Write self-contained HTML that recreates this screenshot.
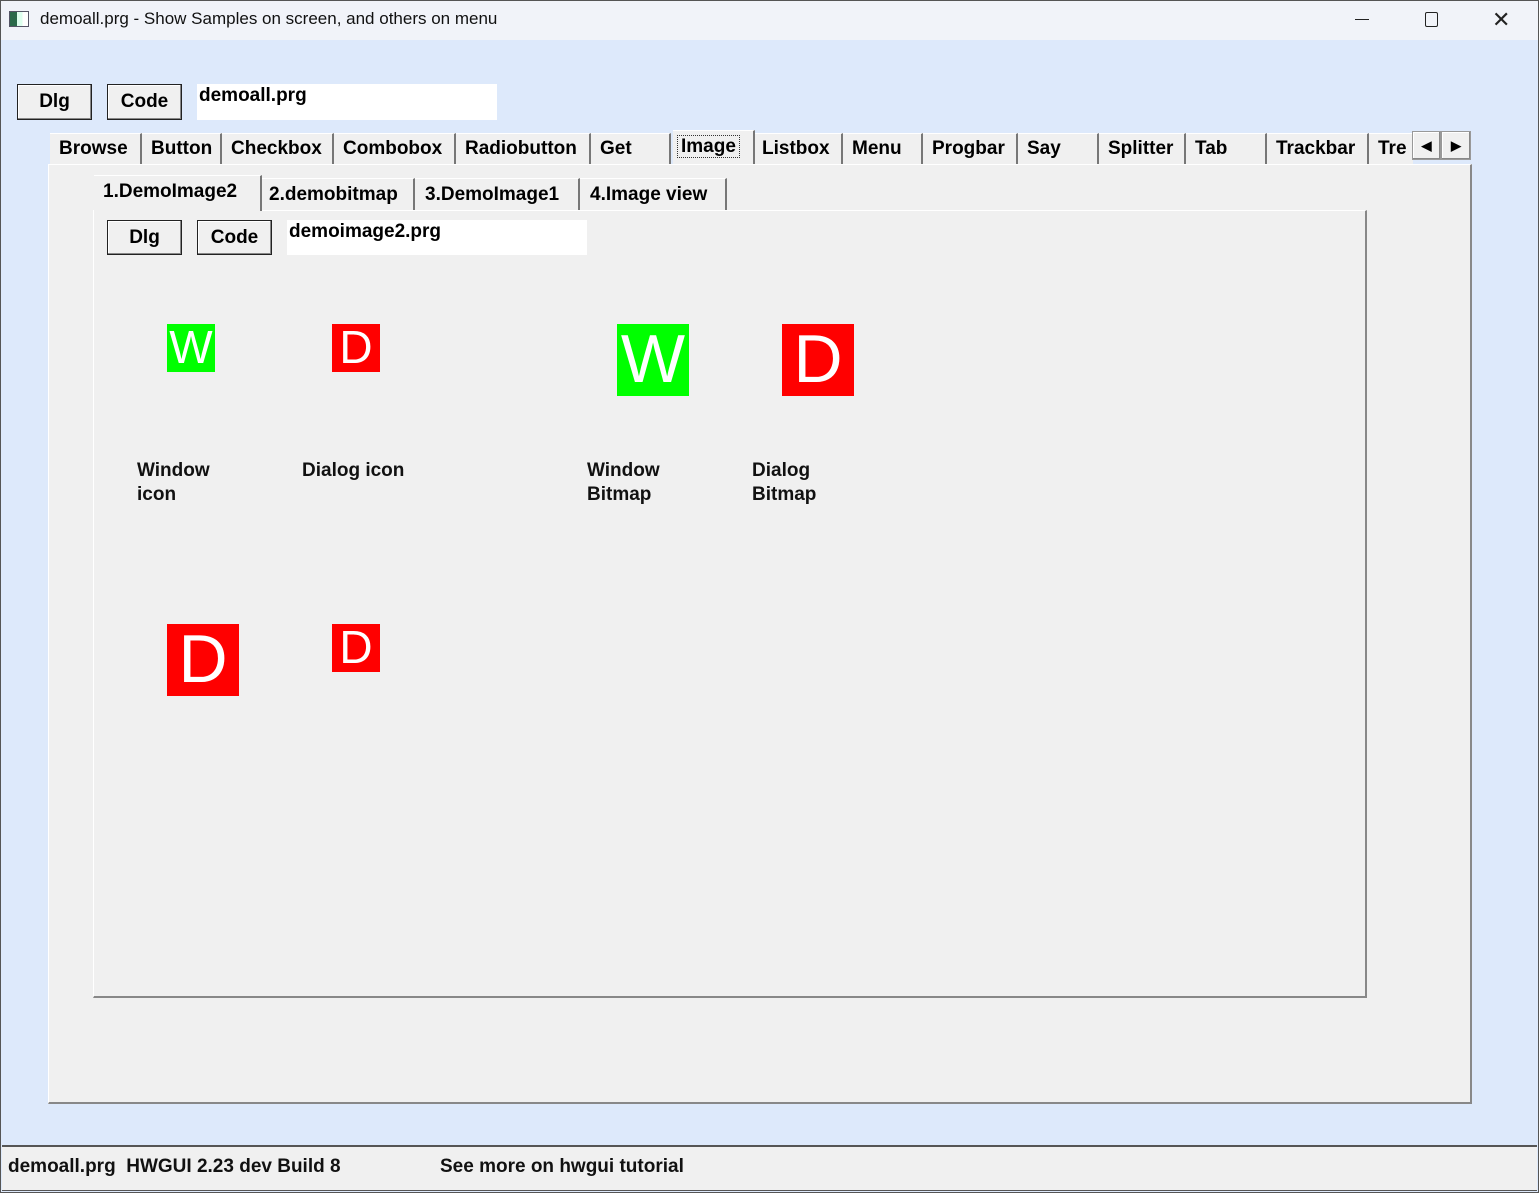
<!DOCTYPE html>
<html><head><style>
*{margin:0;padding:0;box-sizing:border-box}
body{width:1539px;height:1193px;position:relative;background:#dde9fb;overflow:hidden;font-family:"Liberation Sans",sans-serif}
.a{position:absolute}
.t{font-weight:bold;font-size:19px;color:#111;white-space:nowrap}
.btn{position:absolute;background:#f0f0f0;border:1px solid #222;box-shadow:inset -1px -1px 0 #888,inset 1px 1px 0 #fff;text-align:center;font-weight:bold;font-size:19px;line-height:34px}
.ed{position:absolute;background:#fff;font-weight:bold;font-size:19px;padding-left:2px;line-height:24px}
.tab{position:absolute;top:133px;height:31px;background:#f0f0f0;border-top:1px solid #fff;border-right:2px solid #777;font-weight:bold;font-size:19px;line-height:30px;padding-left:9px;white-space:nowrap;overflow:hidden}
.itab{position:absolute;top:178px;height:32px;background:#f0f0f0;border-top:1px solid #fff;border-right:2px solid #777;font-weight:bold;font-size:19px;line-height:32px;padding-left:7px;white-space:nowrap}
.ic{position:absolute;color:#fff;text-align:center;font-family:"Liberation Sans",sans-serif}
</style></head><body>
<div class="a" style="left:0;top:0;width:1539px;height:40px;background:#f1f3f9"></div>
<div class="a" style="left:9px;top:11px;width:20px;height:16px;border:1px solid #556;background:linear-gradient(90deg,#2a6a4a 0 40%,#dfe 40% 70%,#fff 70%)"></div>
<div class="a" style="left:40px;top:9px;font-size:17px;color:#111">demoall.prg - Show Samples on screen, and others on menu</div>
<div class="a" style="left:1355px;top:19px;width:14px;height:1px;background:#222"></div>
<div class="a" style="left:1425px;top:12px;width:13px;height:15px;border:1.5px solid #222;border-radius:2px"></div>
<div class="a" style="left:1492px;top:9px;font-size:22px;color:#222;line-height:22px">&#x2715;</div>

<div class="btn" style="left:17px;top:84px;width:75px;height:36px">Dlg</div>
<div class="btn" style="left:107px;top:84px;width:75px;height:36px">Code</div>
<div class="ed" style="left:197px;top:84px;width:300px;height:36px">demoall.prg</div>

<div class="a" style="left:48px;top:164px;width:1424px;height:940px;background:#f0f0f0;border-right:2px solid #888;border-bottom:2px solid #888;border-top:1px solid #fff;border-left:1px solid #fff"></div>
<div class="tab" style="left:50px;width:92px">Browse</div>
<div class="tab" style="left:142px;width:80px">Button</div>
<div class="tab" style="left:222px;width:112px">Checkbox</div>
<div class="tab" style="left:334px;width:122px">Combobox</div>
<div class="tab" style="left:456px;width:135px">Radiobutton</div>
<div class="tab" style="left:591px;width:80px">Get</div>
<div class="tab" style="left:673px;top:130px;height:34px;width:82px;line-height:32px;padding-left:5px"><span style="outline:1px dotted #333;padding:0 3px">Image</span></div>
<div class="tab" style="left:755px;width:88px;padding-left:7px">Listbox</div>
<div class="tab" style="left:843px;width:80px">Menu</div>
<div class="tab" style="left:923px;width:95px">Progbar</div>
<div class="tab" style="left:1018px;width:81px">Say</div>
<div class="tab" style="left:1099px;width:87px">Splitter</div>
<div class="tab" style="left:1186px;width:81px">Tab</div>
<div class="tab" style="left:1267px;width:102px">Trackbar</div>
<div class="tab" style="left:1369px;width:44px;border-right:none">Tre</div>
<div class="btn" style="left:1412px;top:131px;width:29px;height:29px;line-height:27px;font-size:13px;border-color:#999">&#9664;</div>
<div class="btn" style="left:1441px;top:131px;width:30px;height:29px;line-height:27px;font-size:13px;border-color:#999">&#9654;</div>

<div class="a" style="left:93px;top:210px;width:1274px;height:788px;background:#f0f0f0;border-top:1px solid #fff;border-left:1px solid #fff;border-right:2px solid #888;border-bottom:2px solid #888"></div>
<div class="itab" style="left:94px;top:175px;height:36px;width:168px;line-height:32px;padding-left:9px">1.DemoImage2</div>
<div class="itab" style="left:262px;width:153px">2.demobitmap</div>
<div class="itab" style="left:415px;width:165px;padding-left:10px">3.DemoImage1</div>
<div class="itab" style="left:580px;width:147px;padding-left:10px">4.Image view</div>

<div class="btn" style="left:107px;top:220px;width:75px;height:35px">Dlg</div>
<div class="btn" style="left:197px;top:220px;width:75px;height:35px">Code</div>
<div class="ed" style="left:287px;top:220px;width:300px;height:35px">demoimage2.prg</div>

<div class="ic" style="left:167px;top:324px;width:48px;height:48px;background:#00ff00;font-size:46px;line-height:46px">W</div>
<div class="ic" style="left:332px;top:324px;width:48px;height:48px;background:#ff0000;font-size:46px;line-height:46px">D</div>
<div class="ic" style="left:617px;top:324px;width:72px;height:72px;background:#00ff00;font-size:68px;line-height:70px">W</div>
<div class="ic" style="left:782px;top:324px;width:72px;height:72px;background:#ff0000;font-size:68px;line-height:70px">D</div>
<div class="ic" style="left:167px;top:624px;width:72px;height:72px;background:#ff0000;font-size:68px;line-height:70px">D</div>
<div class="ic" style="left:332px;top:624px;width:48px;height:48px;background:#ff0000;font-size:46px;line-height:46px">D</div>

<div class="a t" style="left:137px;top:459px;line-height:24px">Window<br>icon</div>
<div class="a t" style="left:302px;top:459px;line-height:24px">Dialog icon</div>
<div class="a t" style="left:587px;top:459px;line-height:24px">Window<br>Bitmap</div>
<div class="a t" style="left:752px;top:459px;line-height:24px">Dialog<br>Bitmap</div>

<div class="a" style="left:2px;top:1145px;width:1535px;height:46px;background:#f0f0f0;border-top:2px solid #555;border-bottom:1px solid #555"></div>
<div class="a t" style="left:8px;top:1156px">demoall.prg&nbsp; HWGUI 2.23 dev Build 8</div>
<div class="a t" style="left:440px;top:1156px">See more on hwgui tutorial</div>
<div class="a" style="left:0;top:0;width:1539px;height:1193px;border:1px solid #555;pointer-events:none"></div>
</body></html>
